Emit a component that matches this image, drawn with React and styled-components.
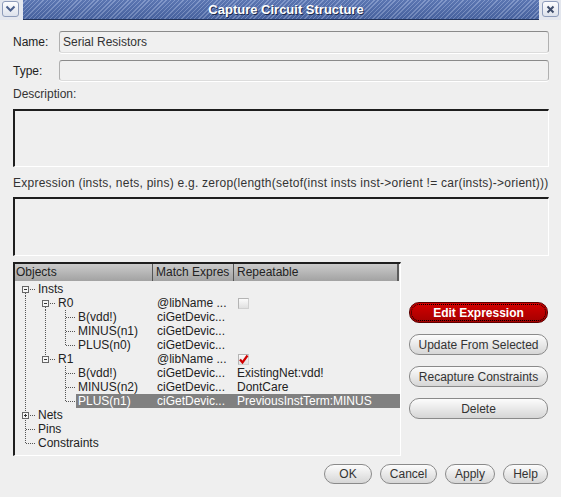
import React from "react";
import styled, { createGlobalStyle } from "styled-components";

const GlobalStyle = createGlobalStyle`
  html, body {
    margin: 0;
    padding: 0;
    background: #efefef;
  }
  body {
    font-family: "Liberation Sans", Arial, sans-serif;
    font-size: 12px;
    color: #222;
  }
`;

const rows = [
  { label: "Insts", guides: ["first"], box: "minus" },
  { label: "R0", guides: ["pipe", "first"], box: "minus", match: "@libName ...", check: "off" },
  { label: "B(vdd!)", guides: ["pipe", "pipe", "mid"], match: "ciGetDevic..." },
  { label: "MINUS(n1)", guides: ["pipe", "pipe", "mid"], match: "ciGetDevic..." },
  { label: "PLUS(n0)", guides: ["pipe", "pipe", "last"], match: "ciGetDevic..." },
  { label: "R1", guides: ["pipe", "last"], box: "minus", match: "@libName ...", check: "on" },
  { label: "B(vdd!)", guides: ["pipe", "blank", "mid"], match: "ciGetDevic...", rep: "ExistingNet:vdd!" },
  { label: "MINUS(n2)", guides: ["pipe", "blank", "mid"], match: "ciGetDevic...", rep: "DontCare" },
  { label: "PLUS(n1)", guides: ["pipe", "blank", "last"], match: "ciGetDevic...", rep: "PreviousInstTerm:MINUS", selected: true },
  { label: "Nets", guides: ["mid"], box: "plus" },
  { label: "Pins", guides: ["mid"] },
  { label: "Constraints", guides: ["last"] },
];

// one indent column of the tree, drawn as dotted connector lines
function Guide({ kind, box, branch }) {
  const dots = { stroke: "#555", strokeDasharray: "1 1", strokeWidth: 1 };
  return (
    <svg width="20" height="14" style={{ display: "block", flex: "none" }}>
      {(kind === "pipe" || kind === "mid") && <line x1="9.5" y1="0" x2="9.5" y2="14" {...dots} />}
      {kind === "first" && <line x1="9.5" y1="7" x2="9.5" y2="14" {...dots} />}
      {kind === "last" && <line x1="9.5" y1="0" x2="9.5" y2="7.5" {...dots} />}
      {branch && <line x1="10" y1="7.5" x2="20" y2="7.5" {...dots} />}
      {box && (
        <g>
          <rect x="6.5" y="4.5" width="6" height="6" fill="#f6f6f6" stroke="#666" />
          <line x1="8" y1="7.5" x2="11" y2="7.5" stroke="#333" />
          {box === "plus" && <line x1="9.5" y1="6" x2="9.5" y2="9" stroke="#333" />}
        </g>
      )}
    </svg>
  );
}

export default function App() {
  return (
    <>
      <GlobalStyle />
      <Window>
        <TitleBar>
          <Cap>
            <CapButton>
              <svg width="11" height="8" viewBox="0 0 11 8">
                <polyline points="1.5,1.5 5.5,5.5 9.5,1.5" fill="none" stroke="#4a5f8c" strokeWidth="2" />
              </svg>
            </CapButton>
          </Cap>
          <Stripes>
            <Title>Capture Circuit Structure</Title>
          </Stripes>
          <Cap $right>
            <CapButton>
              <svg width="9" height="9" viewBox="0 0 9 9">
                <path d="M1.5 1.5 L7.5 7.5 M7.5 1.5 L1.5 7.5" stroke="#3e4c6a" strokeWidth="2" />
              </svg>
            </CapButton>
          </Cap>
        </TitleBar>

        <Body>
          <FieldRow $top={11}>
            <FieldLabel>Name:</FieldLabel>
            <TextField $h={22}>Serial Resistors</TextField>
          </FieldRow>
          <FieldRow $top={7}>
            <FieldLabel>Type:</FieldLabel>
            <TextField $h={21} />
          </FieldRow>

          <Caption $top={6}>Description:</Caption>
          <TextBox $top={8} $h={58} />

          <Caption $top={9} $spread={0.25}>
            Expression (insts, nets, pins) e.g. zerop(length(setof(inst insts inst-&gt;orient != car(insts)-&gt;orient)))
          </Caption>
          <TextBox $top={7} $h={59} />

          <Middle>
            <TreePanel>
              <Header>
                <HeadCell $first>Objects</HeadCell>
                <HeadCell>Match Expres</HeadCell>
                <HeadCell>Repeatable</HeadCell>
              </Header>
              <RowList>
                {rows.map((r, i) => (
                  <Row key={i}>
                    <TreeCell>
                      {r.guides.map((g, j) => {
                        const own = j === r.guides.length - 1;
                        return (
                          <Guide
                            key={j}
                            kind={g}
                            branch={own}
                            box={own ? r.box : undefined}
                          />
                        );
                      })}
                      <NodeLabel $selected={r.selected}>{r.label}</NodeLabel>
                    </TreeCell>
                    <Cell $pad={5} $selected={r.selected}>{r.match}</Cell>
                    <Cell $pad={4} $selected={r.selected}>
                      {r.check ? (
                        <Check>
                          {r.check === "on" && (
                            <svg width="11" height="11" viewBox="0 0 11 11">
                              <path d="M2 5.5 L4.5 8.5 L9.5 1.5" fill="none" stroke="#d00000" strokeWidth="2.2" />
                            </svg>
                          )}
                        </Check>
                      ) : (
                        r.rep
                      )}
                    </Cell>
                  </Row>
                ))}
              </RowList>
            </TreePanel>

            <SideButtons>
              <PillButton $primary>Edit Expression</PillButton>
              <PillButton>Update From Selected</PillButton>
              <PillButton>Recapture Constraints</PillButton>
              <PillButton>Delete</PillButton>
            </SideButtons>
          </Middle>

          <Footer>
            <PillButton $w={48} $h={20}>OK</PillButton>
            <PillButton $w={57} $h={20}>Cancel</PillButton>
            <PillButton $w={50} $h={20}>Apply</PillButton>
            <PillButton $w={45} $h={20}>Help</PillButton>
          </Footer>
        </Body>
      </Window>
    </>
  );
}

const Window = styled.div`
  width: 561px;
  height: 497px;
  box-sizing: border-box;
  background: #efefef;
  display: flex;
  flex-direction: column;
  overflow: hidden;
`;

const TitleBar = styled.div`
  display: flex;
  height: 20px;
  flex: none;
`;

const Cap = styled.div`
  width: ${(p) => (p.$right ? "22px" : "23px")};
  background: #e4e7ee;
  display: flex;
  align-items: flex-start;
  justify-content: ${(p) => (p.$right ? "flex-end" : "flex-start")};
  padding: 1px 2px 0;
  box-sizing: border-box;
`;

const CapButton = styled.div`
  width: 17px;
  height: 16px;
  box-sizing: border-box;
  border: 1px solid #8e9cba;
  border-radius: 3px;
  background: linear-gradient(#fdfdfe, #dde2ec);
  display: flex;
  align-items: center;
  justify-content: center;
`;

const Stripes = styled.div`
  flex: 1;
  display: flex;
  align-items: center;
  justify-content: center;
  border-bottom: 1px solid #22335a;
  background:
    linear-gradient(rgba(255, 255, 255, 0.08), rgba(0, 0, 0, 0.08)),
    repeating-linear-gradient(135deg, #4d6aab 0 2px, #7890c6 2px 3px);
`;

const Title = styled.div`
  color: #fff;
  font-weight: bold;
  font-size: 13px;
  text-shadow: 1px 1px 0 #1c2b4e;
  margin-left: 10px;
`;

const Body = styled.div`
  display: flex;
  flex-direction: column;
  padding: 0 12px 0 13px;
`;

const FieldRow = styled.div`
  display: flex;
  align-items: center;
  margin-top: ${(p) => p.$top}px;
`;

const FieldLabel = styled.div`
  width: 46px;
  flex: none;
`;

const TextField = styled.div`
  flex: 1;
  height: ${(p) => p.$h}px;
  box-sizing: border-box;
  border: 1px solid #b0b0b0;
  border-top-color: #8a8a8a;
  border-bottom-color: #dcdcdc;
  border-radius: 3px;
  box-shadow: 0 1px 0 #fff;
  background: #f0f0f0;
  padding-left: 3px;
  display: flex;
  align-items: center;
  color: #333;
`;

const Caption = styled.div`
  margin-top: ${(p) => p.$top}px;
  height: 14px;
  line-height: 14px;
  white-space: nowrap;
  letter-spacing: ${(p) => p.$spread || 0}px;
  color: #333;
`;

const TextBox = styled.div`
  margin-top: ${(p) => p.$top}px;
  height: ${(p) => p.$h}px;
  box-sizing: border-box;
  border-top: 2px solid #1e1e1e;
  border-left: 2px solid #1e1e1e;
  border-right: 1px solid #fff;
  border-bottom: 1px solid #fff;
  background: #efefef;
`;

const Middle = styled.div`
  display: flex;
  gap: 8px;
  margin-top: 6px;
`;

const TreePanel = styled.div`
  width: 388px;
  height: 194px;
  flex: none;
  box-sizing: border-box;
  border-top: 2px solid #1e1e1e;
  border-left: 2px solid #1e1e1e;
  border-right: 1px solid #fff;
  border-bottom: 1px solid #fff;
  overflow: hidden;
`;

const Header = styled.div`
  display: grid;
  grid-template-columns: 137px 81px 1fr;
  height: 17px;
  margin-right: 1px;
  box-sizing: border-box;
  border-right: 2px solid #5c5c5c;
  background: linear-gradient(#cbcbcb, #a2a2a2);
`;

const HeadCell = styled.div`
  line-height: 17px;
  white-space: nowrap;
  padding-left: ${(p) => (p.$first ? "1px" : "3px")};
  border-left: ${(p) => (p.$first ? "none" : "1px solid #555")};
  color: #222;
`;

const RowList = styled.div`
  padding-top: 1px;
`;

const Row = styled.div`
  display: grid;
  grid-template-columns: 137px 81px 1fr;
  height: 14px;
  line-height: 14px;
  white-space: nowrap;
`;

const TreeCell = styled.div`
  display: flex;
  padding-left: 1px;
`;

const NodeLabel = styled.div`
  flex: 1;
  padding-left: 2px;
  background: ${(p) => (p.$selected ? "#808080" : "transparent")};
  color: ${(p) => (p.$selected ? "#fff" : "#222")};
`;

const Cell = styled.div`
  padding-left: ${(p) => p.$pad}px;
  display: flex;
  align-items: center;
  background: ${(p) => (p.$selected ? "#808080" : "transparent")};
  color: ${(p) => (p.$selected ? "#fff" : "#222")};
`;

const Check = styled.span`
  width: 11px;
  height: 11px;
  box-sizing: border-box;
  border: 1px solid #b4b4b4;
  border-right-color: #d0d0d0;
  border-bottom-color: #d0d0d0;
  background: linear-gradient(#fbfbfb, #e0e0e0);
  display: flex;
  align-items: center;
  justify-content: center;
  margin-left: 1px;

  svg {
    flex: none;
  }
`;

const SideButtons = styled.div`
  width: 139px;
  display: flex;
  flex-direction: column;
  gap: 11px;
  padding-top: 40px;
`;

const PillButton = styled.div`
  box-sizing: border-box;
  height: ${(p) => p.$h || 21}px;
  width: ${(p) => (p.$w ? `${p.$w}px` : "auto")};
  border-radius: 10px;
  border: 1px solid ${(p) => (p.$primary ? "#5a0000" : "#8a8a8a")};
  background: ${(p) =>
    p.$primary
      ? "linear-gradient(#d40000, #a40000)"
      : "linear-gradient(#fcfcfc, #d6d6d6)"};
  color: ${(p) => (p.$primary ? "#fff" : "#333")};
  font-weight: ${(p) => (p.$primary ? "bold" : "normal")};
  outline: ${(p) => (p.$primary ? "1px dotted #000" : "none")};
  outline-offset: -3px;
  display: flex;
  align-items: center;
  justify-content: center;
  white-space: nowrap;
`;

const Footer = styled.div`
  display: flex;
  justify-content: flex-end;
  gap: 8px;
  margin-top: 8px;
  margin-right: 1px;
`;
